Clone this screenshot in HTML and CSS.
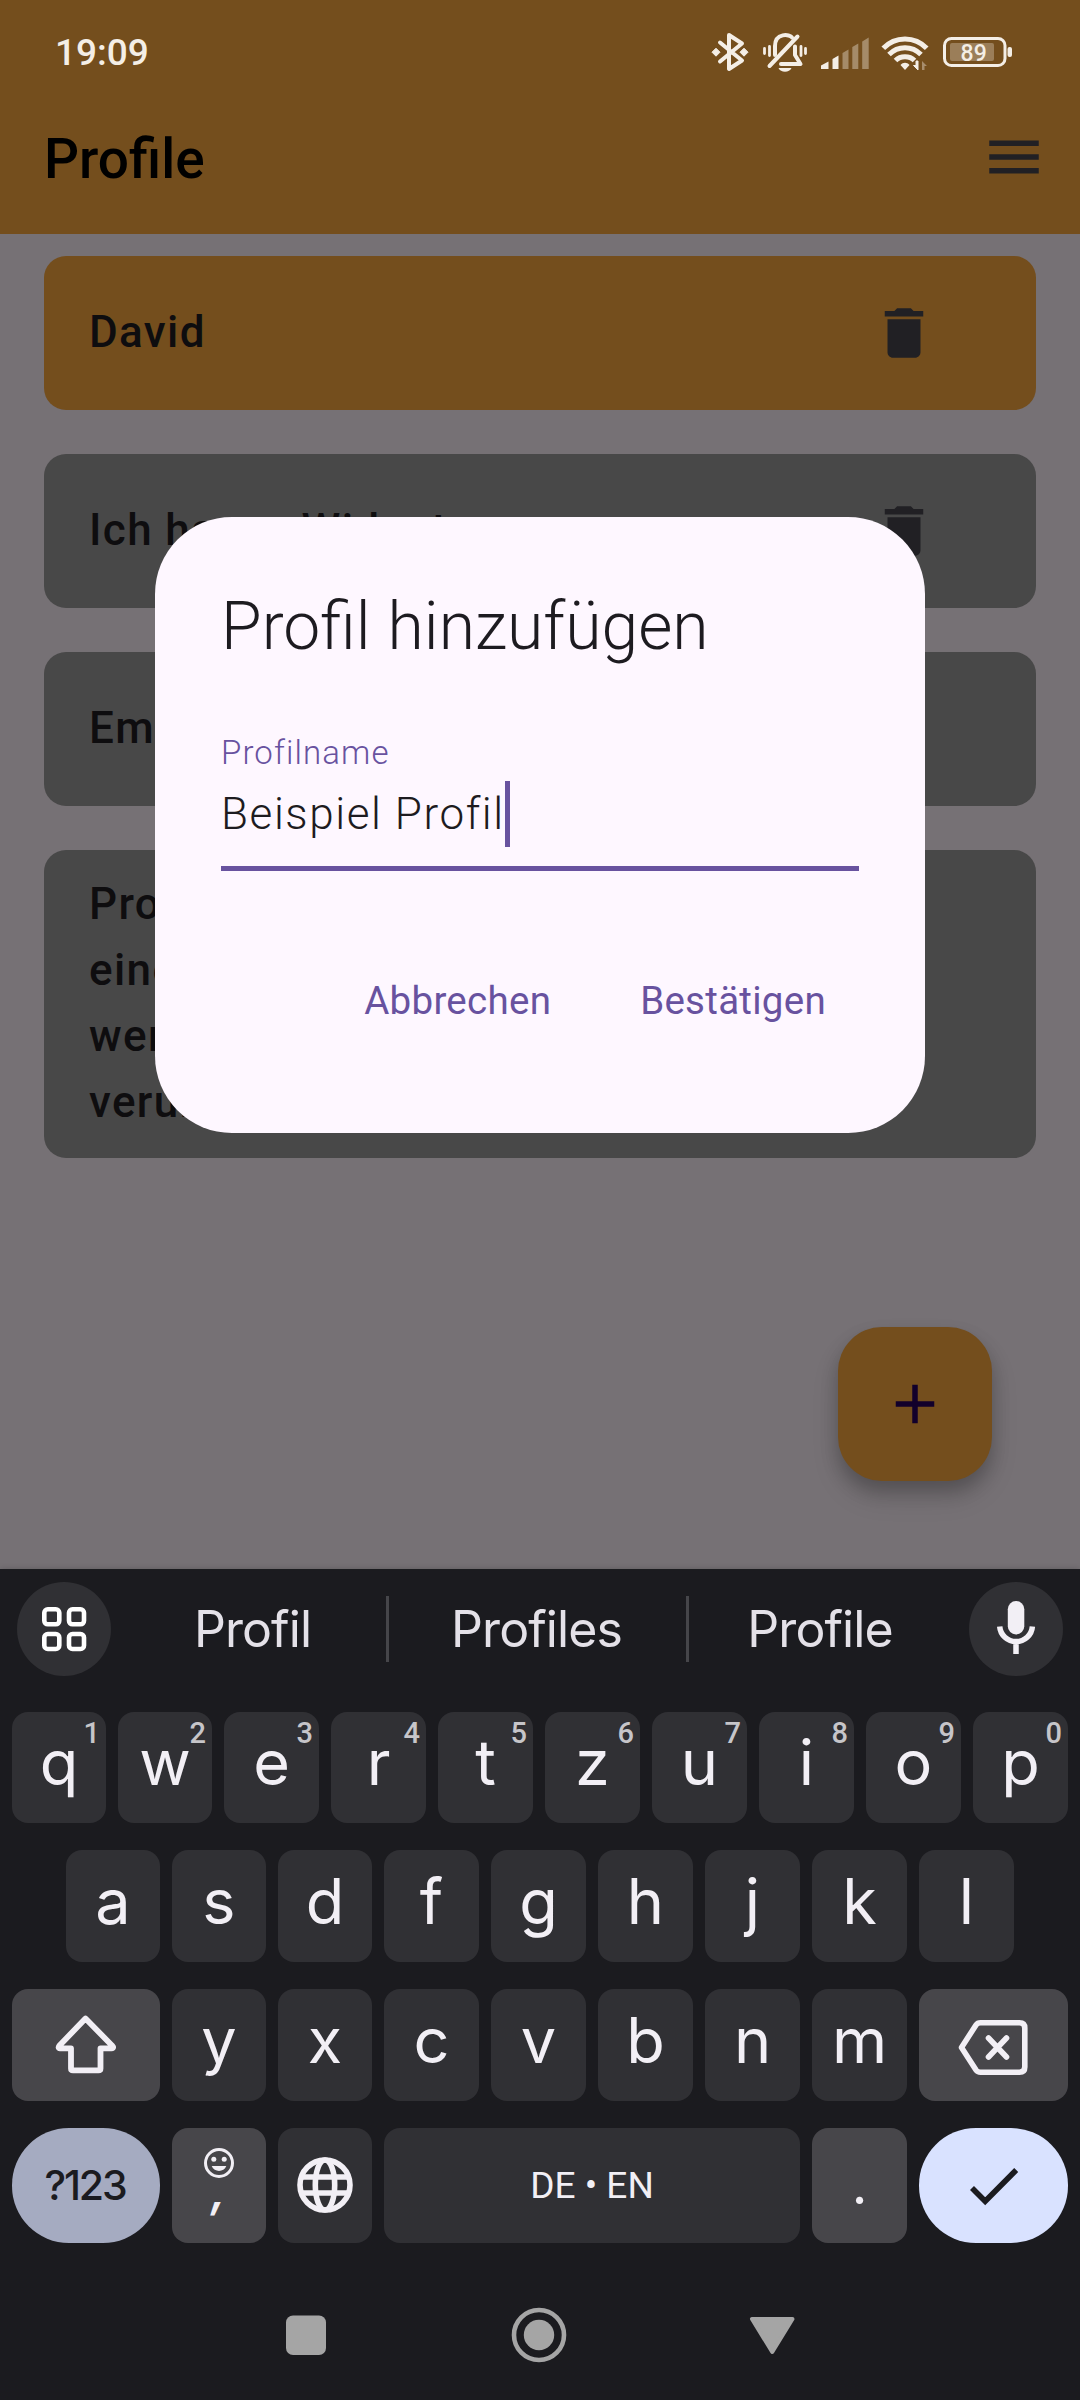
FILE: index.html
```html
<!DOCTYPE html>
<html lang="de">
<head>
<meta charset="utf-8">
<title>Profile</title>
<link rel="stylesheet" href="styles.css">
</head>
<body>
<div class="screen">
  <header class="top">
    <div class="status">
      <span class="clock">19:09</span>
      <div class="status-icons">
        <svg class="s-bt" width="38" height="42" viewBox="711 31 38 42"><path d="M720 42.5 742 60.5 729 69V35L742 43.5 720 61.5" fill="none" stroke="currentColor" stroke-width="4" stroke-linecap="round" stroke-linejoin="round"/><path d="M712 52.2l4-4 4 4-4 4zM740 52.2l4-4 4 4-4 4z" fill="currentColor" stroke="currentColor" stroke-linejoin="round"/></svg>
        <svg class="s-bell" width="46" height="42" viewBox="762 31 46 42"><g fill="none" stroke="currentColor" stroke-linecap="round"><path d="M775 55V46C775 32.500 790 34 792 37.500M795 46.500V55L800.500 64H781" stroke-width="4" stroke-linejoin="round"/><path d="M797.500 36.500 769.500 66" stroke-width="4"/><path d="M764.500 48.500v5M769.500 46.500v9M801 46.500v9M805.500 48.500v5" stroke-width="2.800"/></g><path d="M778.500 68h13c-2 5-11 5-13 0z" fill="currentColor"/></svg>
        <svg class="s-signal" width="50" height="42" viewBox="820 31 50 42" fill="currentColor"><path d="M821 69v-3.500l7.500-4V69zM832.500 69V59l6-3.500V69z"/><path d="M842.500 69V53l6-3.500V69zM852.300 69V47l6-3.500V69zM862.200 69V41.500l6.500-4V69z" opacity=".38"/></svg>
        <svg class="s-wifi" width="48" height="42" viewBox="881 31 48 42"><g fill="none" stroke="currentColor" stroke-width="5"><path d="M883.300 48.300C895 35.800 915 35.800 926.700 48.300"/><path d="M889 54.500C898 45.500 912 45.500 921 54.500"/><path d="M895.500 60.500C900.500 55.500 909.500 55.500 914.500 60.500"/></g><path d="M900.500 65C903 62 907 62 909.500 65L905 70z" fill="currentColor"/><path d="M918 61v9l-4.500-4.500h2.500V61z" fill="currentColor" stroke="currentColor"/><path d="M922 70v-9l5 5h-2.500v4z" fill="currentColor" opacity=".4"/></svg>
        <svg class="s-bat" width="72" height="42" viewBox="942 31 72 42"><rect x="944.500" y="38.500" width="60.500" height="27" rx="7" fill="none" stroke="currentColor" stroke-width="3"/><rect x="950" y="43" width="44" height="18" rx="2" fill="currentColor" opacity=".3"/><rect x="1007.500" y="47" width="4.500" height="10" rx="2" fill="currentColor"/><text x="973.700" y="60.500" text-anchor="middle" class="bat-text">89</text></svg>
      </div>
    </div>
    <div class="appbar">
      <h1>Profile</h1>
      <svg width="66" height="66" viewBox="0 0 24 24" fill="#212024"><path d="M3 18h18v-2H3zM3 13h18v-2H3zM3 6v2h18V6z"/></svg>
    </div>
  </header>

  <main class="list">
    <div class="card active"><span>David</span><svg class="trash" viewBox="0 0 24 24"><path d="M6 19c0 1.100.9 2 2 2h8c1.100 0 2-.9 2-2V7H6zM19 4h-3.500l-1-1h-5l-1 1H5v2h14z"/></svg></div>
    <div class="card"><span>Ich hasse Widgets</span><svg class="trash" viewBox="0 0 24 24"><path d="M6 19c0 1.100.9 2 2 2h8c1.100 0 2-.9 2-2V7H6zM19 4h-3.500l-1-1h-5l-1 1H5v2h14z"/></svg></div>
    <div class="card"><span>Emma</span></div>
    <div class="card"><span>Profile<br>eine<br>werden<br>verursacht</span></div>
    <button class="fab" aria-label="Hinzufügen"><svg width="66" height="66" viewBox="0 0 24 24" fill="#12002b"><path d="M19 13h-6v6h-2v-6H5v-2h6V5h2v6h6z"/></svg></button>
    <section class="dialog">
      <h2>Profil hinzufügen</h2>
      <div class="field">
        <label>Profilname</label>
        <div class="value">Beispiel Profil<i class="caret"></i></div>
      </div>
      <div class="actions"><span>Abbrechen</span><span>Bestätigen</span></div>
    </section>
  </main>

  <section class="keyboard">
    <div class="suggest">
      <span class="round"><svg width="94" height="94" viewBox="17 1582 94 94" fill="none" stroke="#fff" stroke-width="4.600"><rect x="44.300" y="1609.300" width="15" height="15" rx="3.500"/><rect x="69" y="1609.300" width="15" height="15" rx="3.500"/><rect x="44.300" y="1634" width="15" height="15" rx="3.500"/><rect x="69" y="1634" width="15" height="15" rx="3.500"/></svg></span>
      <span class="word w1">Profil</span><i class="bar"></i><span class="word w2">Profiles</span><i class="bar"></i><span class="word w3">Profile</span>
      <span class="round"><svg width="94" height="94" viewBox="969 1582 94 94" fill="none" stroke="#f2eff5"><rect x="1007.800" y="1601" width="16.500" height="33.500" rx="8.200" fill="#f2eff5" stroke="none"/><path d="M999.700 1626.500a16.400 16.400 0 0 0 32.700 0M1016 1643v11" stroke-width="5.500"/></svg></span>
    </div>
    <div class="row r1">
      <b class="key slim">q<sup>1</sup></b><b class="key slim">w<sup>2</sup></b><b class="key">e<sup>3</sup></b><b class="key">r<sup>4</sup></b><b class="key">t<sup>5</sup></b><b class="key">z<sup>6</sup></b><b class="key">u<sup>7</sup></b><b class="key">i<sup>8</sup></b><b class="key">o<sup>9</sup></b><b class="key">p<sup>0</sup></b>
    </div>
    <div class="row r2">
      <b class="key slim">a</b><b class="key slim">s</b><b class="key slim">d</b><b class="key">f</b><b class="key">g</b><b class="key">h</b><b class="key">j</b><b class="key">k</b><b class="key">l</b>
    </div>
    <div class="row r3">
      <b class="key alt shift"><svg width="68" height="68" viewBox="52 2011 68 68" fill="none" stroke="#f2eff5" stroke-width="5.800" stroke-linejoin="round"><path d="M85.500 2018.500 59.500 2045.500Q57.500 2048.300 60 2048.300H71V2068.500Q71 2070.300 73 2070.300H98.500Q100.500 2070.300 100.500 2068.500V2048.300H111.500Q114.500 2048.300 112 2045.500z"/></svg></b>
      <b class="key slim">y</b><b class="key slim">x</b><b class="key">c</b><b class="key">v</b><b class="key">b</b><b class="key">n</b><b class="key">m</b>
      <b class="key alt back"><svg width="76" height="68" viewBox="955.500 2011 76 68" fill="none" stroke="#f2eff5" stroke-width="5.600" stroke-linejoin="round" stroke-linecap="round"><path d="M961 2047.500 975.500 2025Q977 2022.800 980 2022.800H1019Q1024.300 2022.800 1024.300 2028V2067Q1024.300 2072.200 1019 2072.200H980Q977 2072.200 975.500 2070z"/><path d="M988 2038 1006 2057M1006 2038 988 2057"/></svg></b>
    </div>
    <div class="row r4">
      <b class="key sym">?123</b>
      <b class="key slim alt comma"><svg width="32" height="32" viewBox="202.800 2147 32 32"><circle cx="218.800" cy="2163" r="13.500" fill="none" stroke="#f2eff5" stroke-width="3"/><circle cx="213.600" cy="2159.200" r="2.500" fill="#f2eff5"/><circle cx="224" cy="2159.200" r="2.500" fill="#f2eff5"/><path d="M211.500 2166h14.600c-2.500 6.500-12 6.500-14.600 0z" fill="#f2eff5"/></svg><span>,</span></b>
      <b class="key slim globe"><svg width="58" height="58" viewBox="295.700 2156 58 58" fill="none" stroke="#f2eff5" stroke-width="5.600"><circle cx="324.700" cy="2185" r="25"/><ellipse cx="324.700" cy="2185" rx="9.700" ry="25"/><path d="M301 2177h47.500M301 2193h47.500"/></svg></b>
      <b class="key space">DE • EN</b>
      <b class="key alt dot">.</b>
      <b class="key enter"><svg width="56" height="56" viewBox="965.500 2157 56 56" fill="none" stroke="#1b1b1f" stroke-width="5.600"><path d="M971.500 2187 984.700 2200.300 1015.700 2169"/></svg></b>
    </div>
    <nav class="nav">
      <svg width="600" height="60" viewBox="240 2305 600 60" fill="#a5a5a5"><rect x="286" y="2315.500" width="40" height="39.500" rx="7"/><circle cx="539" cy="2335" r="25" fill="none" stroke="#a5a5a5" stroke-width="4.600"/><circle cx="539" cy="2335" r="15.200"/><path d="M752 2319h40.500l-20.250 33z" stroke="#a5a5a5" stroke-width="4" stroke-linejoin="round"/></svg>
    </nav>
  </section>
</div>
</body>
</html>
```
FILE: styles.css
```css
* { box-sizing: border-box; }
body { margin: 0; background: #1b1b1f; font-family: Roboto, sans-serif; }
h1, h2 { margin: 0; }
svg { display: block; flex: none; }
.screen { position: relative; width: 1080px; height: 2400px; display: flex; flex-direction: column; overflow: hidden; }

/* status bar and app bar */
.top { height: 234px; background: #744e1d; }
.status { height: 80px; padding: 31px 66px 0 55px; display: flex; justify-content: space-between; color: #f4eee6; }
.clock { font-size: 37px; line-height: 44px; font-weight: 500; }
.status-icons { display: flex; }
.s-bell { margin-left: 13px; }
.s-signal { margin-left: 12px; }
.s-wifi { margin-left: 11px; }
.s-bat { margin-left: 13px; }
.bat-text { font: 500 23px Roboto, sans-serif; fill: currentColor; }
.appbar { height: 154px; padding: 0 33px 0 44px; display: flex; align-items: center; justify-content: space-between; }
.appbar h1 { font-size: 55px; font-weight: 500; line-height: 75px; padding-top: 4px; color: #000; }

/* profile list */
.list { height: 1335px; padding: 22px 44px 0; background: #767175; display: flex; flex-direction: column; gap: 44px; }
.card { height: 154px; flex: none; padding: 21px 99px 23px 45px; border-radius: 22px; background: #484848; display: flex; align-items: center; justify-content: space-between; font-size: 44px; line-height: 66px; font-weight: 500; letter-spacing: 1.375px; color: #0e0d0f; }
.card:nth-child(4) { height: 308px; }
.card.active { background: #744e1d; }
.trash { width: 66px; height: 66px; fill: #212024; margin-top: 2px; }
.fab { position: absolute; left: 838px; top: 1327px; width: 154px; height: 154px; padding: 0; border: 0; border-radius: 44px; background: #744e1d; display: grid; place-items: center; box-shadow: 0 16px 28px rgba(0,0,0,.12), 0 10px 18px rgba(0,0,0,.2); }

/* dialog */
.dialog { position: absolute; left: 155px; top: 516.5px; width: 770px; height: 616px; padding: 66px; border-radius: 77px; background: #fef7ff; }
.dialog h2 { font-size: 66px; line-height: 88px; font-weight: 340; word-spacing: 1px; color: #1d1b20; }
.field { margin-top: 44px; height: 156px; padding-top: 16px; border-bottom: 5.5px solid #68529f; }
.field label { display: block; font-size: 33px; line-height: 44px; font-weight: 330; letter-spacing: 1.1px; color: #68529f; }
.value { height: 66px; margin-top: 6px; display: flex; align-items: center; font-size: 44px; font-weight: 335; letter-spacing: 1.580px; color: #1d1b20; white-space: nowrap; }
.caret { width: 5.5px; height: 66px; background: #68529f; }
.actions { display: flex; justify-content: flex-end; gap: 89px; margin-top: 97px; padding-right: 33px; font-size: 38.500px; line-height: 66px; font-weight: 450; letter-spacing: .275px; color: #68529f; }

/* keyboard */
.keyboard { height: 831px; background: #1b1b1f; padding-top: 13px; font-family: Inter, sans-serif; color: #f2eff5; box-shadow: 0 0 6px rgba(0,0,0,.2); }
.suggest { height: 94px; padding: 0 17px; display: flex; align-items: center; }
.round { width: 94px; height: 94px; border-radius: 50%; background: #303034; }
.word { text-align: center; font-size: 50px; line-height: 60px; color: #e4e1e8; letter-spacing: -.9px; }
.w1 { width: 275px; padding-left: 8px; }
.w2 { width: 297px; padding-right: 2px; }
.w3 { flex: 1; padding-right: 18px; }
.bar { width: 3px; height: 66px; background: #46464a; }
.row { display: flex; gap: 12px; padding: 0 0 0 12px; }
.r1 { margin-top: 36px; height: 111px; }
.r2 { margin-top: 27px; height: 112px; padding-left: 66px; }
.r3 { margin-top: 27px; height: 112px; }
.r4 { margin-top: 27px; height: 115px; }
.key { position: relative; width: 95px; flex: none; border-radius: 16px; background: #303034; display: flex; align-items: center; justify-content: center; font-size: 63px; font-weight: 400; line-height: 70px; padding-bottom: 11px; }
.key.slim { width: 94px; }
.key sup { position: absolute; right: 6px; top: 4px; font-family: Roboto, sans-serif; font-size: 29px; line-height: 34px; font-weight: 500; color: #c6c5c9; }
.key.alt { background: #47464a; }
.key.shift { width: 148px; padding: 0; }
.key.back { width: 149px; padding: 0; }
.key.sym { width: 148px; border-radius: 57px; padding: 0 2px 2px 0; background: #a5abc1; color: #1b1b1f; font-size: 41px; font-weight: 500; letter-spacing: -2.200px; }
.key.enter { width: 149px; border-radius: 57px; padding: 0; background: #d9e2ff; }
.key.comma { flex-direction: column; justify-content: flex-start; padding: 19px 0 0; font-size: 46px; line-height: 50px; font-weight: 600; }
.comma span { margin-top: -14px; transform: skewX(-10deg); }
.key.globe { padding: 0 0 1px; }
.key.space { width: 416px; font-family: Roboto, sans-serif; font-size: 37px; padding: 0; }
.key.dot { font-size: 50px; font-weight: 500; padding: 0; }
.nav { padding-top: 62px; display: flex; justify-content: center; }
```
